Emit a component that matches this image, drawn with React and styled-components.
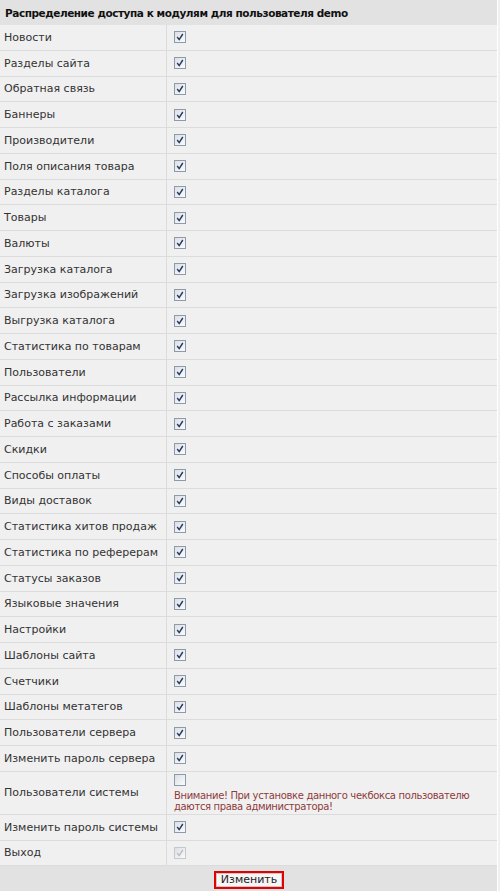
import styled, { createGlobalStyle } from "styled-components";

const GlobalStyle = createGlobalStyle`
    html, body {
        margin: 0;
        padding: 0;
        background: #f0f0f0;
    }
    body {
        font-family: "DejaVu Sans", Verdana, sans-serif;
        font-size: 11px;
        color: #333;
    }
`;

const Page = styled.div`
    width: 497px;
    border-right: 1px solid #fff;
    background: #f0f0f0;
`;

const Header = styled.div`
    height: 25px;
    background: #e2e2e2;
    display: flex;
    align-items: center;
    padding-left: 5px;
    font-weight: bold;
    color: #111;
    font-size: 10.5px;
    letter-spacing: -0.45px;
`;

const Row = styled.div`
    display: grid;
    grid-template-columns: 167px 1fr;
    min-height: ${(p) => p.$h || 24.75}px;
    border-bottom: 1px solid #dcdcdc;
`;

const Label = styled.div`
    display: flex;
    align-items: center;
    padding-left: 4px;
    border-right: 1px solid #dcdcdc;
    color: #333;
`;

const Cell = styled.div`
    display: flex;
    flex-direction: column;
    justify-content: center;
    padding-left: 7px;
`;

const Box = styled.span`
    display: inline-flex;
    align-items: center;
    justify-content: center;
    width: 12px;
    height: 12px;
    box-sizing: border-box;
    border: 1px solid ${(p) => (p.$disabled ? "#c4c9cf" : "#8d9aa9")};
    background: linear-gradient(135deg, #dcdfe3 0%, #fbfbfb 100%);
`;

const Warning = styled.div`
    margin-top: 4px;
    color: #8e3b3b;
    font-size: 10px;
    letter-spacing: -0.35px;
    line-height: 11px;
`;

const Footer = styled.div`
    height: 25px;
    background: #e2e2e2;
    display: flex;
    align-items: center;
    justify-content: center;
    padding-left: 1px;
`;

const Button = styled.button`
    width: 70px;
    height: 18px;
    border: 2px solid #e40000;
    background: #f6f6f6;
    box-shadow: inset 0 0 0 1px #c8c8c8;
    font-family: "DejaVu Sans", Verdana, sans-serif;
    font-size: 11px;
    color: #222;
    padding: 0;
    margin-top: 2px;
`;

const Checkbox = ({ checked = true, disabled = false }) => (
    <Box $disabled={disabled}>
        {checked && (
            <svg width="10" height="10" viewBox="0 0 10 10">
                <path
                    d="M2.2 5 L4.2 7.6 L7.8 2"
                    fill="none"
                    stroke={disabled ? "#b9bec4" : "#223766"}
                    strokeWidth="1.4"
                />
            </svg>
        )}
    </Box>
);

const modules = [
    "Новости",
    "Разделы сайта",
    "Обратная связь",
    "Баннеры",
    "Производители",
    "Поля описания товара",
    "Разделы каталога",
    "Товары",
    "Валюты",
    "Загрузка каталога",
    "Загрузка изображений",
    "Выгрузка каталога",
    "Статистика по товарам",
    "Пользователи",
    "Рассылка информации",
    "Работа с заказами",
    "Скидки",
    "Способы оплаты",
    "Виды доставок",
    "Статистика хитов продаж",
    "Статистика по реферерам",
    "Статусы заказов",
    "Языковые значения",
    "Настройки",
    "Шаблоны сайта",
    "Счетчики",
    "Шаблоны метатегов",
    "Пользователи сервера",
    "Изменить пароль сервера",
];

const App = () => {
    return (
        <Page>
            <GlobalStyle />
            <Header>Распределение доступа к модулям для пользователя demo</Header>
            {modules.map((name) => (
                <Row key={name}>
                    <Label>{name}</Label>
                    <Cell>
                        <Checkbox />
                    </Cell>
                </Row>
            ))}
            <Row $h={42}>
                <Label>Пользователи системы</Label>
                <Cell>
                    <Checkbox checked={false} />
                    <Warning>
                        Внимание! При установке данного чекбокса пользователю даются права администратора!
                    </Warning>
                </Cell>
            </Row>
            <Row>
                <Label>Изменить пароль системы</Label>
                <Cell>
                    <Checkbox />
                </Cell>
            </Row>
            <Row>
                <Label>Выход</Label>
                <Cell>
                    <Checkbox disabled />
                </Cell>
            </Row>
            <Footer>
                <Button>Изменить</Button>
            </Footer>
        </Page>
    );
};

export default App;
